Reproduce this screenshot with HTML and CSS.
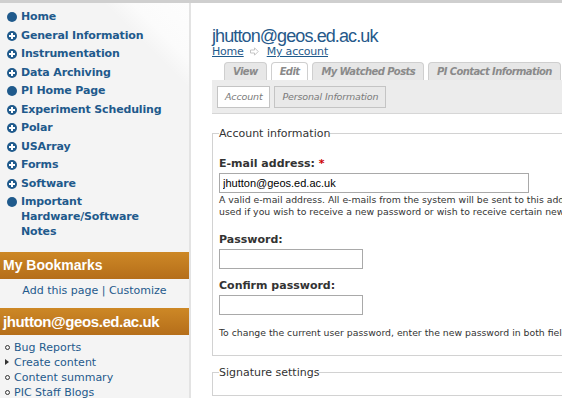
FILE: index.html
```html
<!DOCTYPE html>
<html lang="en">
<head>
  <meta charset="UTF-8">
  <title>My account</title>
  <link rel="stylesheet" href="styles.css">
</head>
<body>
  <div class="page">
    <aside class="sidebar">
      <ul class="nav">
        <li class="leaf"><a href="#">Home</a></li>
        <li class="collapsed"><a href="#">General Information</a></li>
        <li class="collapsed"><a href="#">Instrumentation</a></li>
        <li class="collapsed"><a href="#">Data Archiving</a></li>
        <li class="leaf"><a href="#">PI Home Page</a></li>
        <li class="collapsed"><a href="#">Experiment Scheduling</a></li>
        <li class="collapsed"><a href="#">Polar</a></li>
        <li class="collapsed"><a href="#">USArray</a></li>
        <li class="collapsed"><a href="#">Forms</a></li>
        <li class="collapsed"><a href="#">Software</a></li>
        <li class="leaf"><a href="#">Important Hardware/Software Notes</a></li>
      </ul>

      <div class="block">
        <h2 class="block-title">My Bookmarks</h2>
        <p class="bookmark-links"><a href="#">Add this page</a> | <a href="#">Customize</a></p>
      </div>

      <div class="block">
        <h2 class="block-title">jhutton@geos.ed.ac.uk</h2>
        <ul class="user-menu">
          <li><a href="#">Bug Reports</a></li>
          <li class="closed"><a href="#">Create content</a></li>
          <li><a href="#">Content summary</a></li>
          <li><a href="#">PIC Staff Blogs</a></li>
        </ul>
      </div>
    </aside>

    <main class="content">
      <h1 class="page-title">jhutton@geos.ed.ac.uk</h1>
      <div class="breadcrumb">
        <a href="#">Home</a>
        <svg class="crumb-arrow" width="9" height="9" viewBox="0 0 9 9">
          <path d="M0.5 3 H4.5 V0.8 L8.2 4.5 L4.5 8.2 V6 H0.5 Z" fill="none" stroke="#c4c4c4" stroke-width="1"/>
        </svg>
        <a href="#">My account</a>
      </div>

      <ul class="tabs">
        <li><a href="#">View</a></li>
        <li class="active"><a href="#">Edit</a></li>
        <li><a href="#">My Watched Posts</a></li>
        <li><a href="#">PI Contact Information</a></li>
      </ul>
      <ul class="subtabs">
        <li class="active"><a href="#">Account</a></li>
        <li><a href="#">Personal Information</a></li>
      </ul>

      <form class="account-form">
        <fieldset>
          <legend>Account information</legend>
          <div class="form-item item-mail">
            <label for="mail">E-mail address: <span class="required">*</span></label>
            <input type="text" id="mail" class="field-wide" value="jhutton@geos.ed.ac.uk">
            <div class="description">A valid e-mail address. All e-mails from the system will be sent to this address. The e-mail address is not made public and will only be<br>used if you wish to receive a new password or wish to receive certain news or notifications by e-mail.</div>
          </div>
          <div class="form-item item-pass">
            <label for="pass1">Password:</label>
            <input type="password" id="pass1" class="field-short">
          </div>
          <div class="form-item item-confirm">
            <label for="pass2">Confirm password:</label>
            <input type="password" id="pass2" class="field-short">
          </div>
          <div class="description note">To change the current user password, enter the new password in both fields.</div>
        </fieldset>

        <fieldset class="signature">
          <legend>Signature settings</legend>
        </fieldset>
      </form>
    </main>
  </div>
</body>
</html>
```

FILE: styles.css
```css
/* layout */
body {
  margin: 0;
  border-top: 3px solid #cfcfcf;
  font-family: "DejaVu Sans", Verdana, sans-serif;
  background: #fff;
  color: #333;
  overflow: hidden;
}

a {
  color: #1f5a8c;
  text-decoration: none;
}

.page {
  display: flex;
  width: 900px;
  height: 395px;
}

/* sidebar */
.sidebar {
  flex: none;
  width: 189px;
  border-right: 2px solid #e3e3e3;
  background:
    linear-gradient(225deg, #fdfdfd 0, #fbfbfb 30%, rgba(244, 244, 244, 0) 45%) right top / 90px 100px no-repeat,
    #f4f4f4;
}

.nav {
  list-style: none;
  margin: 0;
  padding: 6px 0 9px;
}

.nav li {
  display: flex;
  align-items: flex-start;
  padding: 0 20px 0 7px;
  margin-bottom: 3.5px;
  font-size: 11px;
  line-height: 15px;
  font-weight: bold;
  letter-spacing: -0.15px;
}

.nav li::before {
  content: "";
  flex: none;
  width: 10px;
  height: 10px;
  margin: 3px 4px 0 0;
  border-radius: 50%;
  background: #1f5a8c;
}

.nav li.collapsed::before {
  background:
    linear-gradient(#fff, #fff) center / 6px 2px no-repeat,
    linear-gradient(#fff, #fff) center / 2px 6px no-repeat,
    #1f5a8c;
}

.block-title {
  margin: 0;
  padding-left: 3px;
  height: 27px;
  line-height: 27px;
  font-family: "Liberation Sans", Arial, sans-serif;
  font-size: 14px;
  font-weight: bold;
  color: #fff;
  background: linear-gradient(#cd8826, #b56e1a);
  white-space: nowrap;
}

.block:last-child .block-title {
  font-size: 15px;
  letter-spacing: -0.4px;
}

.bookmark-links {
  margin: 0;
  padding: 4px 0 10px;
  text-align: center;
  font-size: 11px;
  line-height: 15px;
  color: #1f5a8c;
}

.user-menu {
  list-style: none;
  margin: 0;
  padding: 5px 0 0 5px;
  font-size: 11px;
  line-height: 15px;
}

.user-menu li {
  display: flex;
  align-items: center;
}

.user-menu li::before {
  content: "";
  flex: none;
  width: 3px;
  height: 3px;
  margin-right: 4px;
  border: 1px solid #333;
  border-radius: 50%;
}

.user-menu li.closed::before {
  width: 0;
  height: 0;
  margin-right: 5px;
  border: 3px solid transparent;
  border-left: 4px solid #333;
  border-right: 0;
  border-radius: 0;
}

/* main content */
.content {
  flex: 1;
  padding-left: 21px;
}

.page-title {
  margin: 0;
  padding-top: 24px;
  font-family: "Liberation Sans", Arial, sans-serif;
  font-size: 18px;
  line-height: 18px;
  font-weight: normal;
  letter-spacing: -0.9px;
  color: #26598a;
}

.breadcrumb {
  display: flex;
  align-items: center;
  gap: 6px;
  font-size: 11px;
  line-height: 13px;
  letter-spacing: -0.2px;
}

.breadcrumb a {
  text-decoration: underline;
}

.crumb-arrow {
  margin-right: 2px;
}

.tabs {
  display: flex;
  gap: 4px;
  list-style: none;
  margin: 4px 0 0;
  padding-left: 12px;
}

.tabs a {
  display: block;
  padding: 0 8px;
  line-height: 17px;
  border: 1px solid #cfcfcf;
  border-bottom: none;
  border-radius: 4px 4px 0 0;
  background: #e7e7e7;
  font-size: 10px;
  font-weight: bold;
  font-style: italic;
  letter-spacing: -0.6px;
  color: #8a8a8a;
}

.tabs .active a {
  background: #fff;
}

.subtabs {
  display: flex;
  gap: 4px;
  list-style: none;
  margin: 0;
  padding: 6px 5px 5px;
  background: #ececec;
  border-bottom: 1px solid #d6d6d6;
}

.subtabs a {
  display: block;
  padding: 0 7px;
  line-height: 20px;
  border: 1px solid #c4c4c4;
  background: #e9e9e9;
  font-size: 9.5px;
  font-style: italic;
  letter-spacing: -0.15px;
  color: #7a7a7a;
}

.subtabs .active a {
  background: #fff;
}

/* form */
.account-form fieldset {
  margin: 13px 0 0;
  padding: 0 6px 16px;
  border: 1px solid #d2d2d2;
}

.account-form legend {
  padding: 0;
  font-size: 11px;
  line-height: 13px;
  color: #333;
}

.account-form .signature {
  margin-top: 10px;
}

.item-mail {
  margin-top: 17px;
}

.item-pass {
  margin-top: 15px;
}

.item-confirm {
  margin-top: 10px;
}

.form-item label {
  display: block;
  margin-bottom: 2px;
  font-size: 11px;
  line-height: 14px;
  font-weight: bold;
  color: #333;
}

.required {
  color: #c00;
}

.form-item input {
  display: block;
  box-sizing: border-box;
  height: 20px;
  margin: 0;
  padding: 0 3px;
  border: 1px solid #a9a9a9;
  font-family: "Liberation Sans", Arial, sans-serif;
  font-size: 11px;
  color: #000;
}

.field-wide {
  width: 310px;
}

.field-short {
  width: 144px;
}

.description {
  margin-top: 1px;
  font-size: 9.3px;
  line-height: 12px;
  color: #333;
  white-space: nowrap;
}

.description.note {
  margin-top: 12px;
}
```
